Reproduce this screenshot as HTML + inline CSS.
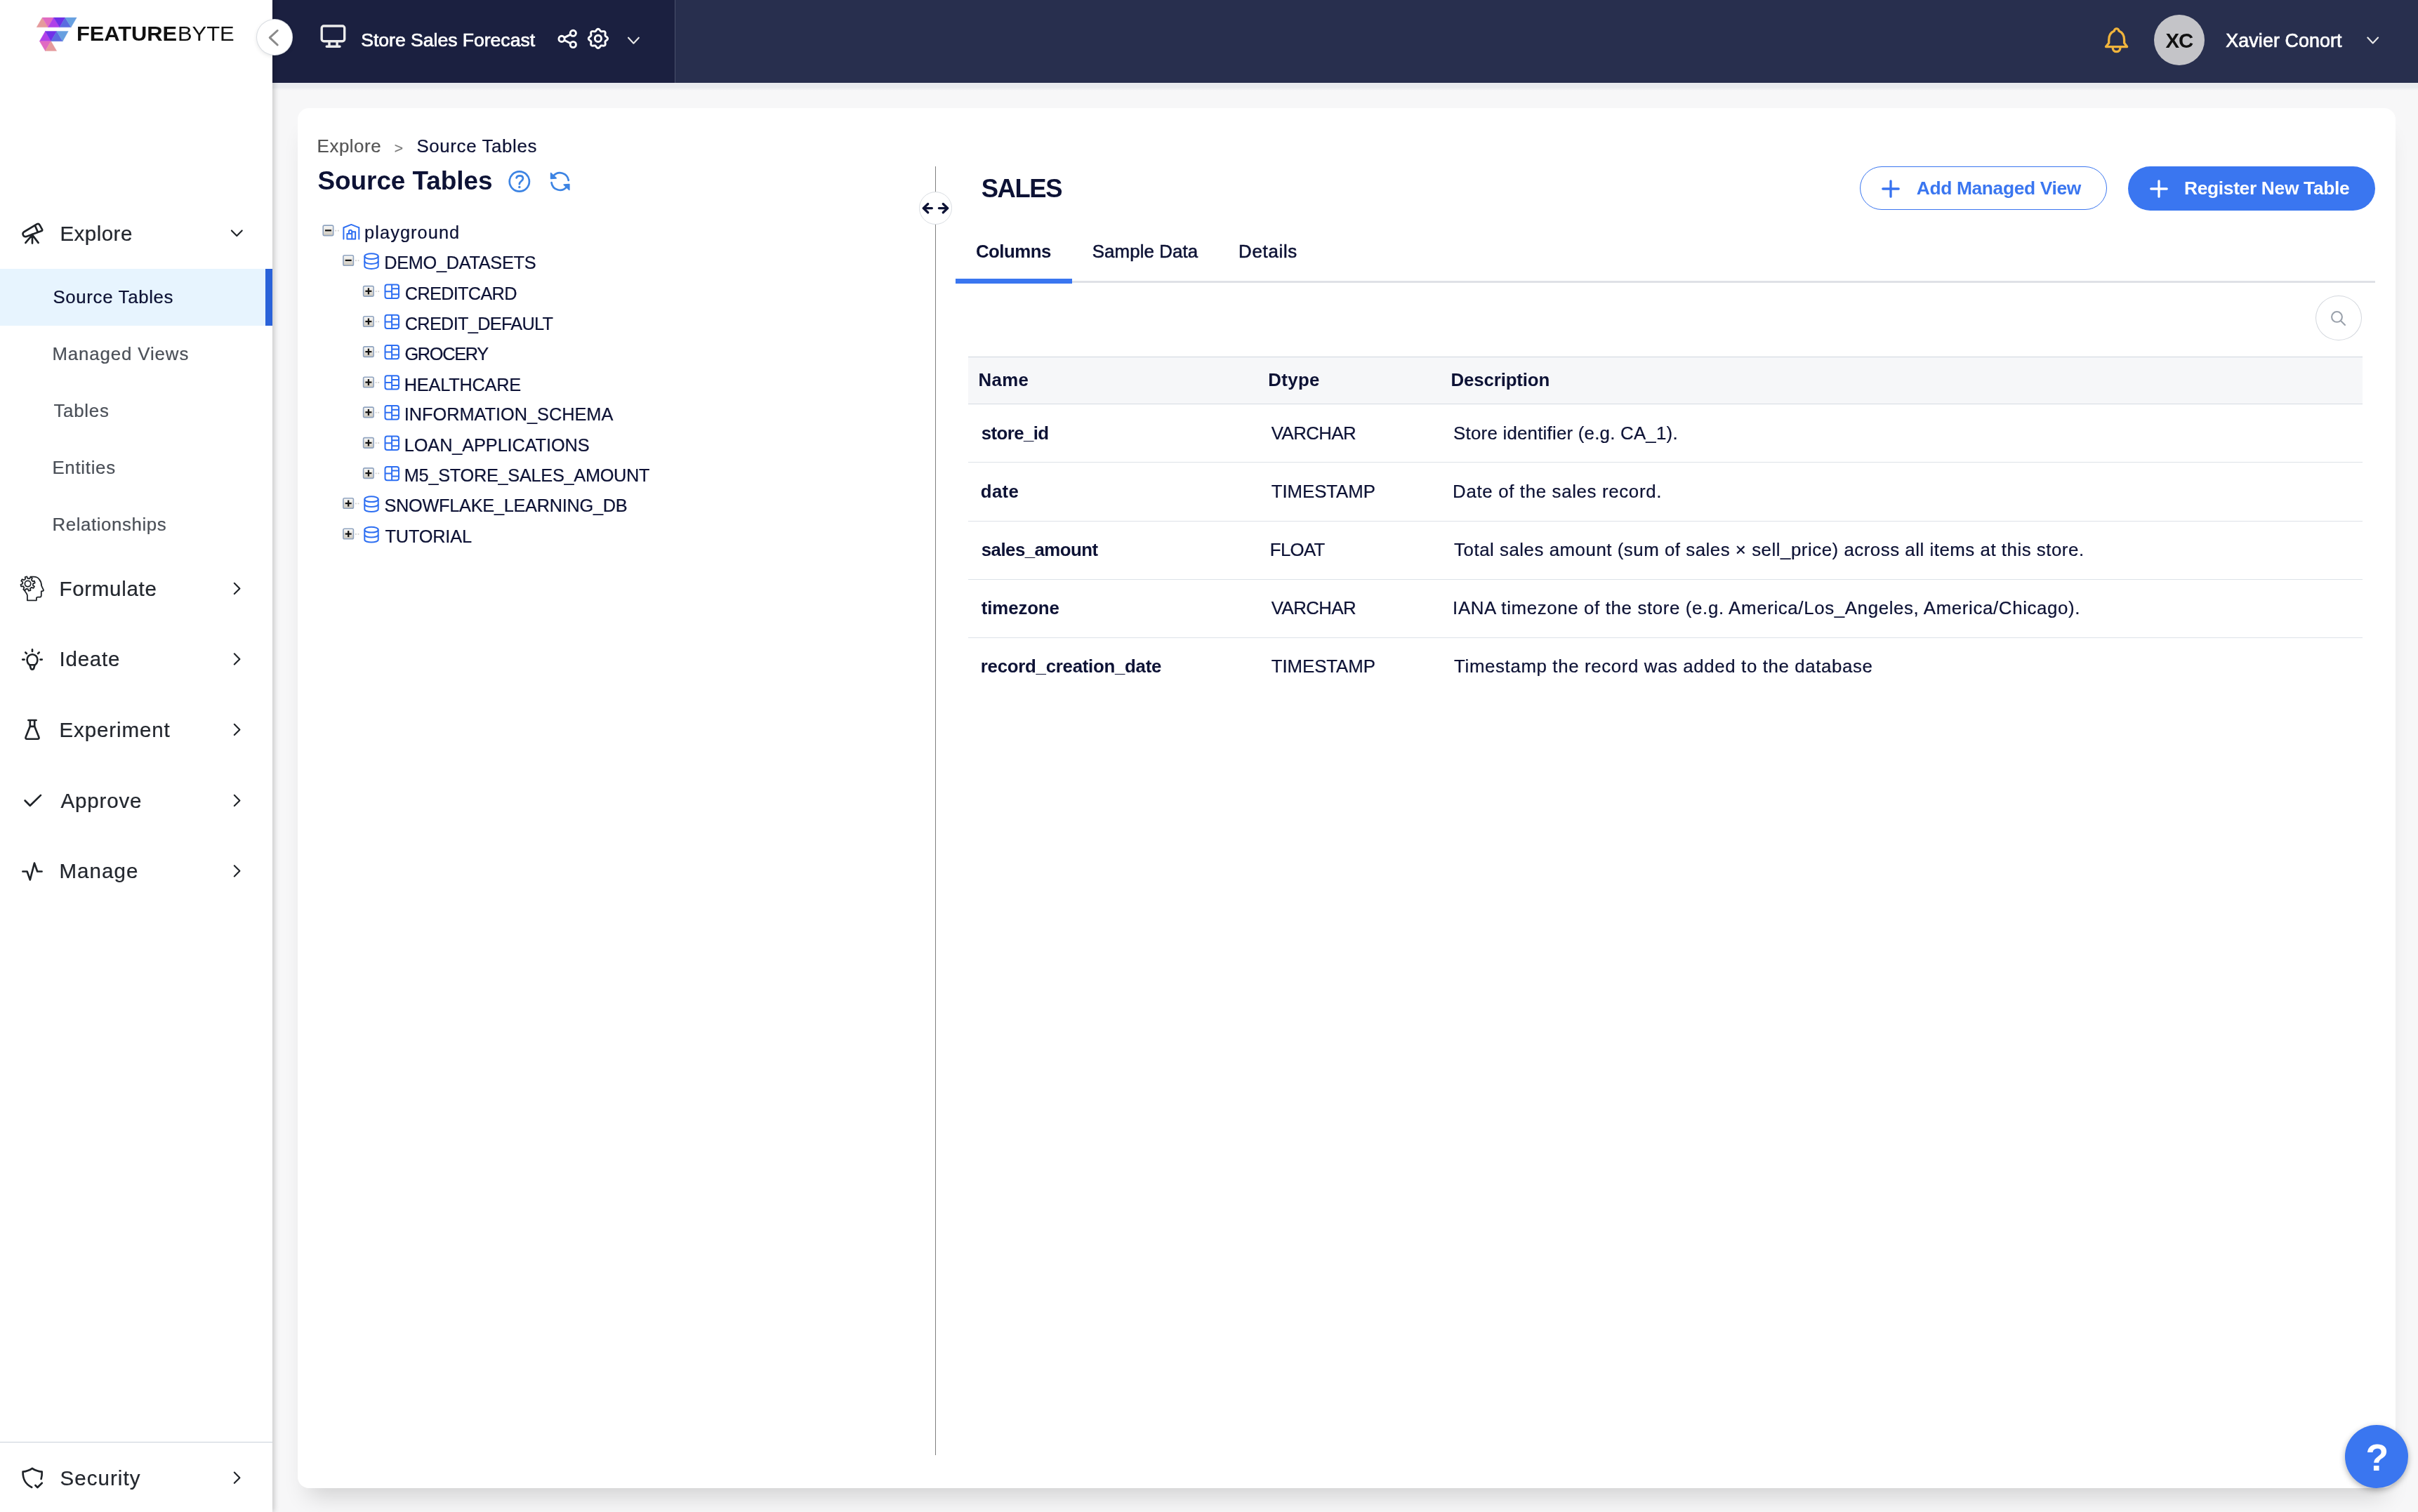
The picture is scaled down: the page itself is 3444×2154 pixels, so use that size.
<!DOCTYPE html>
<html lang="en">
<head>
<meta charset="utf-8">
<title>FeatureByte - Source Tables</title>
<style>
html,body{margin:0;padding:0}
body{width:3444px;height:2154px;overflow:hidden;background:#f7f7f8;font-family:"Liberation Sans",sans-serif;position:relative}
.t{position:absolute;white-space:pre;line-height:1;font-family:"Liberation Sans",sans-serif}
.abs{position:absolute}
#txt{position:absolute;left:0;top:0;width:3444px;height:2154px;will-change:transform;opacity:.999}
svg{position:absolute;overflow:visible}
#side{position:absolute;left:0;top:0;width:388px;height:2154px;background:#fff;box-shadow:2px 0 8px rgba(0,0,0,.22)}
#sel{position:absolute;left:0;top:383px;width:388px;height:81px;background:#e7f4fe}
#selbar{position:absolute;left:378px;top:383px;width:10px;height:81px;background:#2a62d9}
#sdiv{position:absolute;left:0;top:2054px;width:388px;height:1px;background:#c9d1d9}
#top{position:absolute;left:388px;top:0;width:3056px;height:118px;background:#282f4e;box-shadow:none}
#topsh{position:absolute;left:388px;top:118px;width:3056px;height:11px;background:linear-gradient(#e9ebef 0,#e9ebef 58%,#f7f7f8 100%)}
#topl{position:absolute;left:0;top:0;width:573px;height:118px;background:#1b2040;border-right:1px solid #4a506b}
#collapse{position:absolute;left:366px;top:28px;width:50px;height:50px;border-radius:50%;background:#fff;box-shadow:0 0 0 1px #d9dde2, 0 2px 6px rgba(0,0,0,.12)}
#avatar{position:absolute;left:3068px;top:21px;width:72px;height:72px;border-radius:50%;background:#c4c4c8}
#card{position:absolute;left:424px;top:154px;width:2988px;height:1966px;border-radius:16px;background:#fff;box-shadow:0 26px 34px -15px rgba(0,0,0,.16)}
#split{position:absolute;left:1332px;top:237px;width:1px;height:1836px;background:#808080}
#handle{position:absolute;left:1309px;top:273px;width:45px;height:45px;border-radius:50%;background:#fff;border:1px solid #d9dde2}
#tabline{position:absolute;left:1361px;top:400px;width:2022px;height:3px;background:#dfe1e6}
#tabact{position:absolute;left:1361px;top:397px;width:166px;height:7px;background:#3a76f0}
#btn1{position:absolute;left:2648.8px;top:236.8px;width:350px;height:60px;border:1.6px solid #3a76f0;border-radius:32px;background:#fff}
#btn2{position:absolute;left:3031px;top:237px;width:352px;height:63px;border-radius:32px;background:#3a76f0}
#search{position:absolute;left:3298.2px;top:421px;width:63.8px;height:62px;border:1.6px solid #d3d7dd;border-radius:50%;background:#fff}
#thead{position:absolute;left:1379px;top:508px;width:1986px;height:66px;background:#f6f7f9;border-top:1px solid #cfd6de;border-bottom:1px solid #d5dbe2}
.rl{position:absolute;left:1379px;width:1986px;height:1px;background:#dde2e8}
#fab{position:absolute;left:3340px;top:2030px;width:90px;height:90px;border-radius:50%;background:#3a76f0;box-shadow:0 3px 8px rgba(0,0,0,.3)}
</style>
</head>
<body>
<div id="topsh"></div>
<div id="top"><div id="topl"></div></div>
<div id="side">
  <div id="sel"></div><div id="selbar"></div><div id="sdiv"></div>
</div>
<div id="collapse"></div>
<div id="avatar"></div>
<div id="card"></div>
<div id="split"></div><div id="handle"></div>
<div id="tabline"></div><div id="tabact"></div>
<div id="btn1"></div><div id="btn2"></div>
<div id="search"></div>
<div id="thead"></div>
<div class="rl" style="top:658px"></div>
<div class="rl" style="top:742px"></div>
<div class="rl" style="top:825px"></div>
<div class="rl" style="top:908px"></div>
<div id="fab"></div>
<svg width="3444" height="2154" viewBox="0 0 3444 2154" style="left:0;top:0">
<defs><linearGradient id="bx" x1="0" y1="0" x2="0" y2="1"><stop offset="0" stop-color="#fbfbfa"/><stop offset="1" stop-color="#cdc8bd"/></linearGradient></defs>
<path d="M52.2,38.8 L60.2,25.1 L68.5,38.8 Z" fill="#e59a9c" stroke="#e59a9c" stroke-width="0.4"/>
<path d="M60.2,25.1 L76.4,25.1 L68.5,38.8 Z" fill="#e06ac2" stroke="#e06ac2" stroke-width="0.4"/>
<path d="M68.5,38.8 L76.4,25.1 L85.0,38.8 Z" fill="#b040e8" stroke="#b040e8" stroke-width="0.4"/>
<path d="M76.4,25.1 L92.9,25.1 L85.0,38.8 Z" fill="#7030e8" stroke="#7030e8" stroke-width="0.4"/>
<path d="M85.0,38.8 L92.9,25.1 L101.2,38.8 Z" fill="#5c6ce0" stroke="#5c6ce0" stroke-width="0.4"/>
<path d="M92.9,25.1 L109.2,25.1 L101.2,38.8 Z" fill="#68a0e0" stroke="#68a0e0" stroke-width="0.4"/>
<path d="M56.4,58.7 L64.5,44.5 L72.6,58.7 Z" fill="#b040e8" stroke="#b040e8" stroke-width="0.4"/>
<path d="M64.5,44.5 L80.8,44.5 L72.6,58.7 Z" fill="#7030e8" stroke="#7030e8" stroke-width="0.4"/>
<path d="M72.6,58.7 L80.8,44.5 L89.3,58.7 Z" fill="#5c6ce0" stroke="#5c6ce0" stroke-width="0.4"/>
<path d="M80.8,44.5 L97.2,44.5 L89.3,58.7 Z" fill="#68a0e0" stroke="#68a0e0" stroke-width="0.4"/>
<path d="M56.4,58.7 L72.6,58.7 L64.5,72.6 Z" fill="#e06ac2" stroke="#e06ac2" stroke-width="0.4"/>
<path d="M64.5,72.6 L72.6,58.7 L80.7,72.6 Z" fill="#e59a9c" stroke="#e59a9c" stroke-width="0.4"/>
<path d="M395.2,43.5 L384.2,53.6 L395.2,64" fill="none" stroke="#8a8a8a" stroke-width="3" stroke-linecap="round" stroke-linejoin="round"/>
<g fill="none" stroke="#1f2328" stroke-width="2.65" stroke-linecap="round" stroke-linejoin="round">
<path d="M33.9,330.5 L52.4,319.4 Q55.0,318.0 56.6,320.7 L60.0,326.9 Q60.7,328.4 59.1,329.0 L37.6,336.9 Q34.4,337.9 32.9,334.7 Q31.8,332.1 33.9,330.5 Z"/>
<path d="M49.9,321.4 L53.5,329.6"/>
<path d="M46,333.8 V346.6 M46,334.6 L36.4,345.9 M46,334.6 L54.6,345.9"/>
<path d="M42.2,947.2 C39.6,945.6 38.6,942.6 38.6,939.6 A7.4,7.4 0 0 1 53.4,939.6 C53.4,942.6 52.4,945.6 49.8,947.2 Z"/>
<path d="M42.6,947.6 L43.6,951.4 Q44.2,953.6 46,953.6 Q47.8,953.6 48.4,951.4 L49.4,947.6"/>
<path d="M46,925.4 V928 M36.3,929.5 L37.9,931 M55.7,929.5 L54.1,931 M32.2,939.6 H34.6 M57.4,939.6 H59.8"/>
<path d="M42.8,1026 V1034.8 L36.7,1049.9 Q35.7,1052.7 38.6,1052.7 H53.4 Q56.3,1052.7 55.3,1049.9 L49.2,1034.8 V1026 M40.4,1026 H51.6 M42.8,1034.8 H49.2"/>
<path d="M35.6,1140.5 L42.8,1147.7 L58,1132.9"/>
<path d="M32.4,1241.5 H38.6 L42.8,1253.4 L49,1229.6 L53.2,1241.5 H59.6"/>
<path d="M58.6,2107 C59.6,2103.6 59.9,2100 59.7,2096.6 C54.6,2096.2 50,2094.8 45.9,2091.9 C41.8,2094.8 37.4,2096.2 32.6,2096.6 C32.4,2106.6 36.6,2114.6 45.2,2118.8"/>
<path d="M50.4,2116 L53.4,2119 L59.8,2112.7"/>
</g>
<g fill="none" stroke="#1f2328" stroke-width="1.8" stroke-linejoin="round" stroke-linecap="round">
<path d="M43.4,821.7 H48.4 C54.4,821.7 59,827.2 59.1,834.4 L62,840.6 Q62.2,841.6 61.2,841.8 L58.8,842.4 V848.2 Q58.8,850.7 56.4,850.7 H54 Q51.9,850.7 51.9,852.6 V855.3 H38.9 V848.2 C38.6,845.6 36,843.2 33.8,839.8"/>
<path d="M41.88,824.35 L43.56,822.20 L45.90,823.58 L44.84,826.09 L46.34,828.08 L49.05,827.75 L49.73,830.38 L47.20,831.41 L46.85,833.88 L49.00,835.56 L47.62,837.90 L45.11,836.84 L43.12,838.34 L43.45,841.05 L40.82,841.73 L39.79,839.20 L37.32,838.85 L35.64,841.00 L33.30,839.62 L34.36,837.11 L32.86,835.12 L30.15,835.45 L29.47,832.82 L32.00,831.79 L32.35,829.32 L30.20,827.64 L31.58,825.30 L34.09,826.36 L36.08,824.86 L35.75,822.15 L38.38,821.47 L39.41,824.00Z" fill="#fff"/>
<circle cx="39.6" cy="831.6" r="4.2"/>
</g>
<path d="M329.9,328.4 L337.3,336.0 L344.7,328.4" fill="none" stroke="#1f2328" stroke-width="2.1" stroke-linecap="round" stroke-linejoin="round"/>
<path d="M333.8,830.8 L341.4,838.4 L333.8,846.0" fill="none" stroke="#1f2328" stroke-width="2.1" stroke-linecap="round" stroke-linejoin="round"/>
<path d="M333.8,931.3 L341.4,938.9 L333.8,946.5" fill="none" stroke="#1f2328" stroke-width="2.1" stroke-linecap="round" stroke-linejoin="round"/>
<path d="M333.8,1031.8 L341.4,1039.4 L333.8,1047.0" fill="none" stroke="#1f2328" stroke-width="2.1" stroke-linecap="round" stroke-linejoin="round"/>
<path d="M333.8,1132.8 L341.4,1140.4 L333.8,1148.0" fill="none" stroke="#1f2328" stroke-width="2.1" stroke-linecap="round" stroke-linejoin="round"/>
<path d="M333.8,1233.2 L341.4,1240.8 L333.8,1248.4" fill="none" stroke="#1f2328" stroke-width="2.1" stroke-linecap="round" stroke-linejoin="round"/>
<path d="M333.8,2097.6 L341.4,2105.2 L333.8,2112.8" fill="none" stroke="#1f2328" stroke-width="2.1" stroke-linecap="round" stroke-linejoin="round"/>
<g fill="none" stroke="#ececec" stroke-width="3.4" stroke-linecap="round" stroke-linejoin="round">
<rect x="458.2" y="37" width="32.5" height="21.8" rx="3"/>
<path d="M469,59.5 V65.5 M480.1,59.5 V65.5 M465.2,66.2 H484"/>
</g>
<g fill="none" stroke="#ffffff" stroke-width="2.9">
<circle cx="800" cy="55.4" r="4.1"/><circle cx="816.3" cy="47.3" r="4.1"/><circle cx="816.3" cy="63.5" r="4.1"/>
<path d="M803.7,53.6 L812.6,49.1 M803.7,57.2 L812.6,61.7"/>
<path d="M865.55,54.90 L865.43,55.56 L865.09,56.20 L864.58,56.78 L863.96,57.30 L863.33,57.76 L862.76,58.19 L862.31,58.62 L862.02,59.09 L861.89,59.63 L861.91,60.25 L862.01,60.96 L862.13,61.73 L862.19,62.53 L862.15,63.31 L861.94,64.00 L861.55,64.55 L861.00,64.94 L860.31,65.15 L859.53,65.19 L858.73,65.13 L857.96,65.01 L857.25,64.91 L856.63,64.89 L856.09,65.02 L855.62,65.31 L855.19,65.76 L854.76,66.33 L854.30,66.96 L853.78,67.58 L853.20,68.09 L852.56,68.43 L851.90,68.55 L851.24,68.43 L850.60,68.09 L850.02,67.58 L849.50,66.96 L849.04,66.33 L848.61,65.76 L848.18,65.31 L847.71,65.02 L847.17,64.89 L846.55,64.91 L845.84,65.01 L845.07,65.13 L844.27,65.19 L843.49,65.15 L842.80,64.94 L842.25,64.55 L841.86,64.00 L841.65,63.31 L841.61,62.53 L841.67,61.73 L841.79,60.96 L841.89,60.25 L841.91,59.63 L841.78,59.09 L841.49,58.62 L841.04,58.19 L840.47,57.76 L839.84,57.30 L839.22,56.78 L838.71,56.20 L838.37,55.56 L838.25,54.90 L838.37,54.24 L838.71,53.60 L839.22,53.02 L839.84,52.50 L840.47,52.04 L841.04,51.61 L841.49,51.18 L841.78,50.71 L841.91,50.17 L841.89,49.55 L841.79,48.84 L841.67,48.07 L841.61,47.27 L841.65,46.49 L841.86,45.80 L842.25,45.25 L842.80,44.86 L843.49,44.65 L844.27,44.61 L845.07,44.67 L845.84,44.79 L846.55,44.89 L847.17,44.91 L847.71,44.78 L848.18,44.49 L848.61,44.04 L849.04,43.47 L849.50,42.84 L850.02,42.22 L850.60,41.71 L851.24,41.37 L851.90,41.25 L852.56,41.37 L853.20,41.71 L853.78,42.22 L854.30,42.84 L854.76,43.47 L855.19,44.04 L855.62,44.49 L856.09,44.78 L856.63,44.91 L857.25,44.89 L857.96,44.79 L858.73,44.67 L859.53,44.61 L860.31,44.65 L861.00,44.86 L861.55,45.25 L861.94,45.80 L862.15,46.49 L862.19,47.27 L862.13,48.07 L862.01,48.84 L861.91,49.55 L861.89,50.17 L862.02,50.71 L862.31,51.18 L862.76,51.61 L863.33,52.04 L863.96,52.50 L864.58,53.02 L865.09,53.60 L865.43,54.24Z" stroke-linejoin="round"/>
<circle cx="851.9" cy="54.9" r="4.6"/>
</g>
<path d="M895.0,53.7 L902.4,61.7 L909.8,53.7" fill="none" stroke="#e8e8e8" stroke-width="2.1" stroke-linecap="round" stroke-linejoin="round"/>
<path d="M3372.3,53.5 L3379.7,61.5 L3387.1,53.5" fill="none" stroke="#e8e8e8" stroke-width="2.1" stroke-linecap="round" stroke-linejoin="round"/>
<g fill="none" stroke="#f0b43c" stroke-width="3.3" stroke-linejoin="round" stroke-linecap="round">
<path d="M3011.4,44 C3011.4,39.9 3017.9,39.9 3017.9,44 C3022.6,46 3025.6,51 3025.6,56.9 V61.2 L3029.6,66.6 H2999.5 L3003.7,61.2 V56.9 C3003.7,51 3006.7,46 3011.4,44 Z"/>
<path d="M3009.2,68 C3009.2,75.6 3019.9,75.6 3019.9,68"/>
</g>
<g fill="none" stroke="#3d84e3" stroke-width="2.7" stroke-linecap="round" stroke-linejoin="round">
<circle cx="739.8" cy="258.5" r="14.1"/>
<path d="M735.6,253.4 C736.4,249.6 744.9,249 744.9,254.3 C744.9,258 739.8,258.6 739.8,262.2"/>
<path d="M788.25,250.66 A12.20,12.20 0 0 1 809.68,256.80"/>
<path d="M785.52,260.20 A12.20,12.20 0 0 0 806.95,266.34"/>
</g>
<circle cx="739.8" cy="266.6" r="1.75" fill="#3d84e3"/>
<path d="M784.6,246.6 V254.4 L792.2,253.9 Z" fill="#3d84e3" stroke="#3d84e3" stroke-width="1.6" stroke-linejoin="round"/>
<path d="M810.8,270.4 V262.6 L803.2,263.1 Z" fill="#3d84e3" stroke="#3d84e3" stroke-width="1.6" stroke-linejoin="round"/>
<rect x="460.2" y="321.1" width="14.5" height="14.5" rx="1.8" fill="url(#bx)" stroke="#8fa3bf" stroke-width="1.6"/><rect x="463.0" y="327.2" width="9" height="2.2" fill="#111"/><rect x="477.3" y="327.7" width="1.8" height="1.8" fill="#cfcfcf"/><rect x="480.9" y="327.7" width="1.8" height="1.8" fill="#cfcfcf"/>
<g fill="none" stroke="#2e6ff2" stroke-width="2" stroke-linejoin="round" stroke-linecap="round" transform="translate(488.3,318.4)"><path d="M1.1,22 V5.9 L12,1.5 L23,5.9 V22"/><path d="M6.1,22.2 V14.7 H13 M13,22.2 V11.9 H17.8 V22.2 H6.1"/><path d="M8.7,14.7 V11.5 a2.15,2.15 0 0 1 4.3,0 V11.9"/></g>
<rect x="488.9" y="363.7" width="14.5" height="14.5" rx="1.8" fill="url(#bx)" stroke="#8fa3bf" stroke-width="1.6"/><rect x="491.7" y="369.8" width="9" height="2.2" fill="#111"/><rect x="506.0" y="370.3" width="1.8" height="1.8" fill="#cfcfcf"/><rect x="509.6" y="370.3" width="1.8" height="1.8" fill="#cfcfcf"/>
<g fill="none" stroke="#2e6ff2" stroke-width="2" transform="translate(518.3,360.2)"><ellipse cx="10.7" cy="4.9" rx="9.7" ry="3.9"/><path d="M1,4.9 V18.9 C1,21.2 5.3,22.8 10.7,22.8 C16.1,22.8 20.4,21.2 20.4,18.9 V4.9"/><path d="M1,11.9 C1,14.2 5.3,15.8 10.7,15.8 C16.1,15.8 20.4,14.2 20.4,11.9"/></g>
<rect x="517.6" y="407.6" width="14.5" height="14.5" rx="1.8" fill="url(#bx)" stroke="#8fa3bf" stroke-width="1.6"/><rect x="520.4" y="413.7" width="9" height="2.2" fill="#111"/><rect x="523.8" y="410.3" width="2.2" height="9" fill="#111"/><rect x="534.7" y="414.2" width="1.8" height="1.8" fill="#cfcfcf"/><rect x="538.3" y="414.2" width="1.8" height="1.8" fill="#cfcfcf"/>
<g fill="none" stroke="#2e6ff2" stroke-width="2" transform="translate(547.5,404.6)"><rect x="1" y="1" width="19.5" height="19.3" rx="3"/><path d="M10.6,1 V20.3 M1,10.7 H10.6 M10.6,6.6 H20.5 M10.6,14.6 H20.5"/></g>
<rect x="517.6" y="450.8" width="14.5" height="14.5" rx="1.8" fill="url(#bx)" stroke="#8fa3bf" stroke-width="1.6"/><rect x="520.4" y="456.9" width="9" height="2.2" fill="#111"/><rect x="523.8" y="453.5" width="2.2" height="9" fill="#111"/><rect x="534.7" y="457.4" width="1.8" height="1.8" fill="#cfcfcf"/><rect x="538.3" y="457.4" width="1.8" height="1.8" fill="#cfcfcf"/>
<g fill="none" stroke="#2e6ff2" stroke-width="2" transform="translate(547.5,447.8)"><rect x="1" y="1" width="19.5" height="19.3" rx="3"/><path d="M10.6,1 V20.3 M1,10.7 H10.6 M10.6,6.6 H20.5 M10.6,14.6 H20.5"/></g>
<rect x="517.6" y="493.9" width="14.5" height="14.5" rx="1.8" fill="url(#bx)" stroke="#8fa3bf" stroke-width="1.6"/><rect x="520.4" y="500.0" width="9" height="2.2" fill="#111"/><rect x="523.8" y="496.6" width="2.2" height="9" fill="#111"/><rect x="534.7" y="500.5" width="1.8" height="1.8" fill="#cfcfcf"/><rect x="538.3" y="500.5" width="1.8" height="1.8" fill="#cfcfcf"/>
<g fill="none" stroke="#2e6ff2" stroke-width="2" transform="translate(547.5,490.9)"><rect x="1" y="1" width="19.5" height="19.3" rx="3"/><path d="M10.6,1 V20.3 M1,10.7 H10.6 M10.6,6.6 H20.5 M10.6,14.6 H20.5"/></g>
<rect x="517.6" y="537.3" width="14.5" height="14.5" rx="1.8" fill="url(#bx)" stroke="#8fa3bf" stroke-width="1.6"/><rect x="520.4" y="543.5" width="9" height="2.2" fill="#111"/><rect x="523.8" y="540.1" width="2.2" height="9" fill="#111"/><rect x="534.7" y="544.0" width="1.8" height="1.8" fill="#cfcfcf"/><rect x="538.3" y="544.0" width="1.8" height="1.8" fill="#cfcfcf"/>
<g fill="none" stroke="#2e6ff2" stroke-width="2" transform="translate(547.5,534.3)"><rect x="1" y="1" width="19.5" height="19.3" rx="3"/><path d="M10.6,1 V20.3 M1,10.7 H10.6 M10.6,6.6 H20.5 M10.6,14.6 H20.5"/></g>
<rect x="517.6" y="580.1" width="14.5" height="14.5" rx="1.8" fill="url(#bx)" stroke="#8fa3bf" stroke-width="1.6"/><rect x="520.4" y="586.2" width="9" height="2.2" fill="#111"/><rect x="523.8" y="582.9" width="2.2" height="9" fill="#111"/><rect x="534.7" y="586.8" width="1.8" height="1.8" fill="#cfcfcf"/><rect x="538.3" y="586.8" width="1.8" height="1.8" fill="#cfcfcf"/>
<g fill="none" stroke="#2e6ff2" stroke-width="2" transform="translate(547.5,577.1)"><rect x="1" y="1" width="19.5" height="19.3" rx="3"/><path d="M10.6,1 V20.3 M1,10.7 H10.6 M10.6,6.6 H20.5 M10.6,14.6 H20.5"/></g>
<rect x="517.6" y="623.6" width="14.5" height="14.5" rx="1.8" fill="url(#bx)" stroke="#8fa3bf" stroke-width="1.6"/><rect x="520.4" y="629.8" width="9" height="2.2" fill="#111"/><rect x="523.8" y="626.4" width="2.2" height="9" fill="#111"/><rect x="534.7" y="630.2" width="1.8" height="1.8" fill="#cfcfcf"/><rect x="538.3" y="630.2" width="1.8" height="1.8" fill="#cfcfcf"/>
<g fill="none" stroke="#2e6ff2" stroke-width="2" transform="translate(547.5,620.6)"><rect x="1" y="1" width="19.5" height="19.3" rx="3"/><path d="M10.6,1 V20.3 M1,10.7 H10.6 M10.6,6.6 H20.5 M10.6,14.6 H20.5"/></g>
<rect x="517.6" y="666.9" width="14.5" height="14.5" rx="1.8" fill="url(#bx)" stroke="#8fa3bf" stroke-width="1.6"/><rect x="520.4" y="673.0" width="9" height="2.2" fill="#111"/><rect x="523.8" y="669.6" width="2.2" height="9" fill="#111"/><rect x="534.7" y="673.5" width="1.8" height="1.8" fill="#cfcfcf"/><rect x="538.3" y="673.5" width="1.8" height="1.8" fill="#cfcfcf"/>
<g fill="none" stroke="#2e6ff2" stroke-width="2" transform="translate(547.5,663.9)"><rect x="1" y="1" width="19.5" height="19.3" rx="3"/><path d="M10.6,1 V20.3 M1,10.7 H10.6 M10.6,6.6 H20.5 M10.6,14.6 H20.5"/></g>
<rect x="488.9" y="709.8" width="14.5" height="14.5" rx="1.8" fill="url(#bx)" stroke="#8fa3bf" stroke-width="1.6"/><rect x="491.7" y="716.0" width="9" height="2.2" fill="#111"/><rect x="495.1" y="712.6" width="2.2" height="9" fill="#111"/><rect x="506.0" y="716.5" width="1.8" height="1.8" fill="#cfcfcf"/><rect x="509.6" y="716.5" width="1.8" height="1.8" fill="#cfcfcf"/>
<g fill="none" stroke="#2e6ff2" stroke-width="2" transform="translate(518.3,706.3)"><ellipse cx="10.7" cy="4.9" rx="9.7" ry="3.9"/><path d="M1,4.9 V18.9 C1,21.2 5.3,22.8 10.7,22.8 C16.1,22.8 20.4,21.2 20.4,18.9 V4.9"/><path d="M1,11.9 C1,14.2 5.3,15.8 10.7,15.8 C16.1,15.8 20.4,14.2 20.4,11.9"/></g>
<rect x="488.9" y="753.3" width="14.5" height="14.5" rx="1.8" fill="url(#bx)" stroke="#8fa3bf" stroke-width="1.6"/><rect x="491.7" y="759.5" width="9" height="2.2" fill="#111"/><rect x="495.1" y="756.1" width="2.2" height="9" fill="#111"/><rect x="506.0" y="760.0" width="1.8" height="1.8" fill="#cfcfcf"/><rect x="509.6" y="760.0" width="1.8" height="1.8" fill="#cfcfcf"/>
<g fill="none" stroke="#2e6ff2" stroke-width="2" transform="translate(518.3,749.8)"><ellipse cx="10.7" cy="4.9" rx="9.7" ry="3.9"/><path d="M1,4.9 V18.9 C1,21.2 5.3,22.8 10.7,22.8 C16.1,22.8 20.4,21.2 20.4,18.9 V4.9"/><path d="M1,11.9 C1,14.2 5.3,15.8 10.7,15.8 C16.1,15.8 20.4,14.2 20.4,11.9"/></g>
<g fill="none" stroke="#0d1235" stroke-width="3.3" stroke-linecap="round" stroke-linejoin="round">
<path d="M1327.4,296.6 H1315.2 M1321.7,290.5 L1315.2,296.6 L1321.7,302.8"/>
<path d="M1337.4,296.6 H1349.8 M1343.3,290.5 L1349.8,296.6 L1343.3,302.8"/>
</g>
<path d="M2681.8,269 H2704.2 M2693,257.8 V280.2" stroke="#3772f0" stroke-width="3.3" stroke-linecap="round" fill="none"/>
<path d="M3063.8,269 H3086.2 M3075,257.8 V280.2" stroke="#ffffff" stroke-width="3.3" stroke-linecap="round" fill="none"/>
<g fill="none" stroke="#9aa1ab" stroke-width="2.1" stroke-linecap="round"><circle cx="3328.5" cy="451.4" r="7.4"/><path d="M3334,457 L3340,463"/></g>
</svg>
<div id="txt">
<span class="t" style="left:85.41px;top:318.19px;font-size:29.54px;font-weight:400;color:#23272e;letter-spacing:0.462px;-webkit-text-stroke:0.22px #23272e">Explore</span>
<span class="t" style="left:75.41px;top:411.02px;font-size:25.85px;font-weight:400;color:#0d1235;letter-spacing:0.653px;-webkit-text-stroke:0.22px #0d1235">Source Tables</span>
<span class="t" style="left:74.41px;top:492.22px;font-size:25.85px;font-weight:400;color:#4b5058;letter-spacing:0.874px;-webkit-text-stroke:0.22px #4b5058">Managed Views</span>
<span class="t" style="left:76.41px;top:573.02px;font-size:25.85px;font-weight:400;color:#4b5058;letter-spacing:0.740px;-webkit-text-stroke:0.22px #4b5058">Tables</span>
<span class="t" style="left:74.41px;top:653.82px;font-size:25.85px;font-weight:400;color:#4b5058;letter-spacing:0.708px;-webkit-text-stroke:0.22px #4b5058">Entities</span>
<span class="t" style="left:74.41px;top:735.02px;font-size:25.85px;font-weight:400;color:#4b5058;letter-spacing:0.596px;-webkit-text-stroke:0.22px #4b5058">Relationships</span>
<span class="t" style="left:84.41px;top:823.89px;font-size:29.54px;font-weight:400;color:#23272e;letter-spacing:0.684px;-webkit-text-stroke:0.22px #23272e">Formulate</span>
<span class="t" style="left:84.41px;top:924.39px;font-size:29.54px;font-weight:400;color:#23272e;letter-spacing:0.800px;-webkit-text-stroke:0.22px #23272e">Ideate</span>
<span class="t" style="left:84.41px;top:1024.89px;font-size:29.54px;font-weight:400;color:#23272e;letter-spacing:0.892px;-webkit-text-stroke:0.22px #23272e">Experiment</span>
<span class="t" style="left:86.41px;top:1125.89px;font-size:29.54px;font-weight:400;color:#23272e;letter-spacing:0.852px;-webkit-text-stroke:0.22px #23272e">Approve</span>
<span class="t" style="left:84.41px;top:1226.29px;font-size:29.54px;font-weight:400;color:#23272e;letter-spacing:1.037px;-webkit-text-stroke:0.22px #23272e">Manage</span>
<span class="t" style="left:85.41px;top:2090.69px;font-size:29.54px;font-weight:400;color:#23272e;letter-spacing:1.053px;-webkit-text-stroke:0.22px #23272e">Security</span>
<span class="t" style="left:109.34px;top:33.40px;font-size:30px;font-weight:700;color:#111111;letter-spacing:-0.084px;transform:scaleX(1.03);transform-origin:0 0">FEATURE</span>
<span class="t" style="left:252.74px;top:33.40px;font-size:30px;font-weight:400;color:#111111;letter-spacing:-0.034px;transform:scaleX(1.03);transform-origin:0 0">BYTE</span>
<span class="t" style="left:514.25px;top:44.29px;font-size:26.59px;font-weight:400;color:#ffffff;letter-spacing:-0.020px;-webkit-text-stroke:0.7px #ffffff">Store Sales Forecast</span>
<span class="t" style="left:3084.50px;top:42.61px;font-size:29.4px;font-weight:700;color:#111111;letter-spacing:-1.103px">XC</span>
<span class="t" style="left:3170.35px;top:44.61px;font-size:26.8px;font-weight:400;color:#ffffff;letter-spacing:0.110px;-webkit-text-stroke:0.7px #ffffff">Xavier Conort</span>
<span class="t" style="left:451.61px;top:196.02px;font-size:25.85px;font-weight:400;color:#555555;letter-spacing:0.554px;-webkit-text-stroke:0.22px #555555">Explore</span>
<span class="t" style="left:561.81px;top:200.04px;font-size:21.1px;font-weight:400;color:#777777;letter-spacing:0.000px;-webkit-text-stroke:0.22px #777777">&gt;</span>
<span class="t" style="left:593.51px;top:196.02px;font-size:25.85px;font-weight:400;color:#0d1235;letter-spacing:0.628px;-webkit-text-stroke:0.22px #0d1235">Source Tables</span>
<span class="t" style="left:452.50px;top:239.95px;font-size:36.92px;font-weight:700;color:#0d1235;letter-spacing:-0.044px">Source Tables</span>
<span class="t" style="left:519.11px;top:319.47px;font-size:25.32px;font-weight:400;color:#0d1235;letter-spacing:1.089px;-webkit-text-stroke:0.22px #0d1235">playground</span>
<span class="t" style="left:547.21px;top:362.07px;font-size:25.32px;font-weight:400;color:#0d1235;letter-spacing:-0.293px;-webkit-text-stroke:0.22px #0d1235">DEMO_DATASETS</span>
<span class="t" style="left:576.81px;top:405.97px;font-size:25.32px;font-weight:400;color:#0d1235;letter-spacing:-0.698px;-webkit-text-stroke:0.22px #0d1235">CREDITCARD</span>
<span class="t" style="left:576.81px;top:449.17px;font-size:25.32px;font-weight:400;color:#0d1235;letter-spacing:-0.708px;-webkit-text-stroke:0.22px #0d1235">CREDIT_DEFAULT</span>
<span class="t" style="left:576.41px;top:492.27px;font-size:25.32px;font-weight:400;color:#0d1235;letter-spacing:-1.294px;-webkit-text-stroke:0.22px #0d1235">GROCERY</span>
<span class="t" style="left:575.81px;top:535.67px;font-size:25.32px;font-weight:400;color:#0d1235;letter-spacing:-0.206px;-webkit-text-stroke:0.22px #0d1235">HEALTHCARE</span>
<span class="t" style="left:575.81px;top:578.47px;font-size:25.32px;font-weight:400;color:#0d1235;letter-spacing:-0.012px;-webkit-text-stroke:0.22px #0d1235">INFORMATION_SCHEMA</span>
<span class="t" style="left:575.81px;top:621.97px;font-size:25.32px;font-weight:400;color:#0d1235;letter-spacing:-0.102px;-webkit-text-stroke:0.22px #0d1235">LOAN_APPLICATIONS</span>
<span class="t" style="left:575.81px;top:665.27px;font-size:25.32px;font-weight:400;color:#0d1235;letter-spacing:-0.284px;-webkit-text-stroke:0.22px #0d1235">M5_STORE_SALES_AMOUNT</span>
<span class="t" style="left:547.51px;top:708.17px;font-size:25.32px;font-weight:400;color:#0d1235;letter-spacing:-0.280px;-webkit-text-stroke:0.22px #0d1235">SNOWFLAKE_LEARNING_DB</span>
<span class="t" style="left:548.51px;top:751.67px;font-size:25.32px;font-weight:400;color:#0d1235;letter-spacing:-0.179px;-webkit-text-stroke:0.22px #0d1235">TUTORIAL</span>
<span class="t" style="left:1397.70px;top:250.59px;font-size:36.4px;font-weight:700;color:#0d1235;letter-spacing:-1.388px">SALES</span>
<span class="t" style="left:1389.90px;top:346.32px;font-size:25.85px;font-weight:700;color:#0d1235;letter-spacing:-0.514px">Columns</span>
<span class="t" style="left:1555.78px;top:346.32px;font-size:25.85px;font-weight:400;color:#0d1235;letter-spacing:0.093px;-webkit-text-stroke:0.55px #0d1235">Sample Data</span>
<span class="t" style="left:1764.08px;top:346.32px;font-size:25.85px;font-weight:400;color:#0d1235;letter-spacing:0.696px;-webkit-text-stroke:0.55px #0d1235">Details</span>
<span class="t" style="left:2729.80px;top:255.37px;font-size:26.38px;font-weight:700;color:#3a76f0;letter-spacing:-0.363px">Add Managed View</span>
<span class="t" style="left:3111.00px;top:255.37px;font-size:26.38px;font-weight:700;color:#ffffff;letter-spacing:-0.334px">Register New Table</span>
<span class="t" style="left:1393.40px;top:528.72px;font-size:25.85px;font-weight:700;color:#0d1235;letter-spacing:0.361px">Name</span>
<span class="t" style="left:1806.30px;top:528.72px;font-size:25.85px;font-weight:700;color:#0d1235;letter-spacing:0.318px">Dtype</span>
<span class="t" style="left:2066.50px;top:528.72px;font-size:25.85px;font-weight:700;color:#0d1235;letter-spacing:-0.138px">Description</span>
<span class="t" style="left:1397.80px;top:604.82px;font-size:25.85px;font-weight:700;color:#0d1235;letter-spacing:-0.607px">store_id</span>
<span class="t" style="left:1810.81px;top:604.82px;font-size:25.85px;font-weight:400;color:#0d1235;letter-spacing:-0.584px;-webkit-text-stroke:0.22px #0d1235">VARCHAR</span>
<span class="t" style="left:2070.11px;top:604.82px;font-size:25.85px;font-weight:400;color:#0d1235;letter-spacing:0.226px;-webkit-text-stroke:0.22px #0d1235">Store identifier (e.g. CA_1).</span>
<span class="t" style="left:1396.80px;top:687.82px;font-size:25.85px;font-weight:700;color:#0d1235;letter-spacing:0.311px">date</span>
<span class="t" style="left:1810.81px;top:687.82px;font-size:25.85px;font-weight:400;color:#0d1235;letter-spacing:-0.090px;-webkit-text-stroke:0.22px #0d1235">TIMESTAMP</span>
<span class="t" style="left:2069.11px;top:687.82px;font-size:25.85px;font-weight:400;color:#0d1235;letter-spacing:0.654px;-webkit-text-stroke:0.22px #0d1235">Date of the sales record.</span>
<span class="t" style="left:1397.80px;top:771.02px;font-size:25.85px;font-weight:700;color:#0d1235;letter-spacing:-0.551px">sales_amount</span>
<span class="t" style="left:1808.81px;top:771.02px;font-size:25.85px;font-weight:400;color:#0d1235;letter-spacing:-0.700px;-webkit-text-stroke:0.22px #0d1235">FLOAT</span>
<span class="t" style="left:2071.11px;top:771.02px;font-size:25.85px;font-weight:400;color:#0d1235;letter-spacing:0.522px;-webkit-text-stroke:0.22px #0d1235">Total sales amount (sum of sales × sell_price) across all items at this store.</span>
<span class="t" style="left:1397.80px;top:854.22px;font-size:25.85px;font-weight:700;color:#0d1235;letter-spacing:-0.133px">timezone</span>
<span class="t" style="left:1810.81px;top:854.22px;font-size:25.85px;font-weight:400;color:#0d1235;letter-spacing:-0.584px;-webkit-text-stroke:0.22px #0d1235">VARCHAR</span>
<span class="t" style="left:2069.11px;top:854.22px;font-size:25.85px;font-weight:400;color:#0d1235;letter-spacing:0.635px;-webkit-text-stroke:0.22px #0d1235">IANA timezone of the store (e.g. America/Los_Angeles, America/Chicago).</span>
<span class="t" style="left:1396.80px;top:937.22px;font-size:25.85px;font-weight:700;color:#0d1235;letter-spacing:-0.278px">record_creation_date</span>
<span class="t" style="left:1810.81px;top:937.22px;font-size:25.85px;font-weight:400;color:#0d1235;letter-spacing:-0.090px;-webkit-text-stroke:0.22px #0d1235">TIMESTAMP</span>
<span class="t" style="left:2071.11px;top:937.22px;font-size:25.85px;font-weight:400;color:#0d1235;letter-spacing:0.620px;-webkit-text-stroke:0.22px #0d1235">Timestamp the record was added to the database</span>
<span class="t" style="left:3369.40px;top:2050.11px;font-size:53.5px;font-weight:700;color:#ffffff;letter-spacing:0.000px">?</span>
</div>
</body>
</html>
